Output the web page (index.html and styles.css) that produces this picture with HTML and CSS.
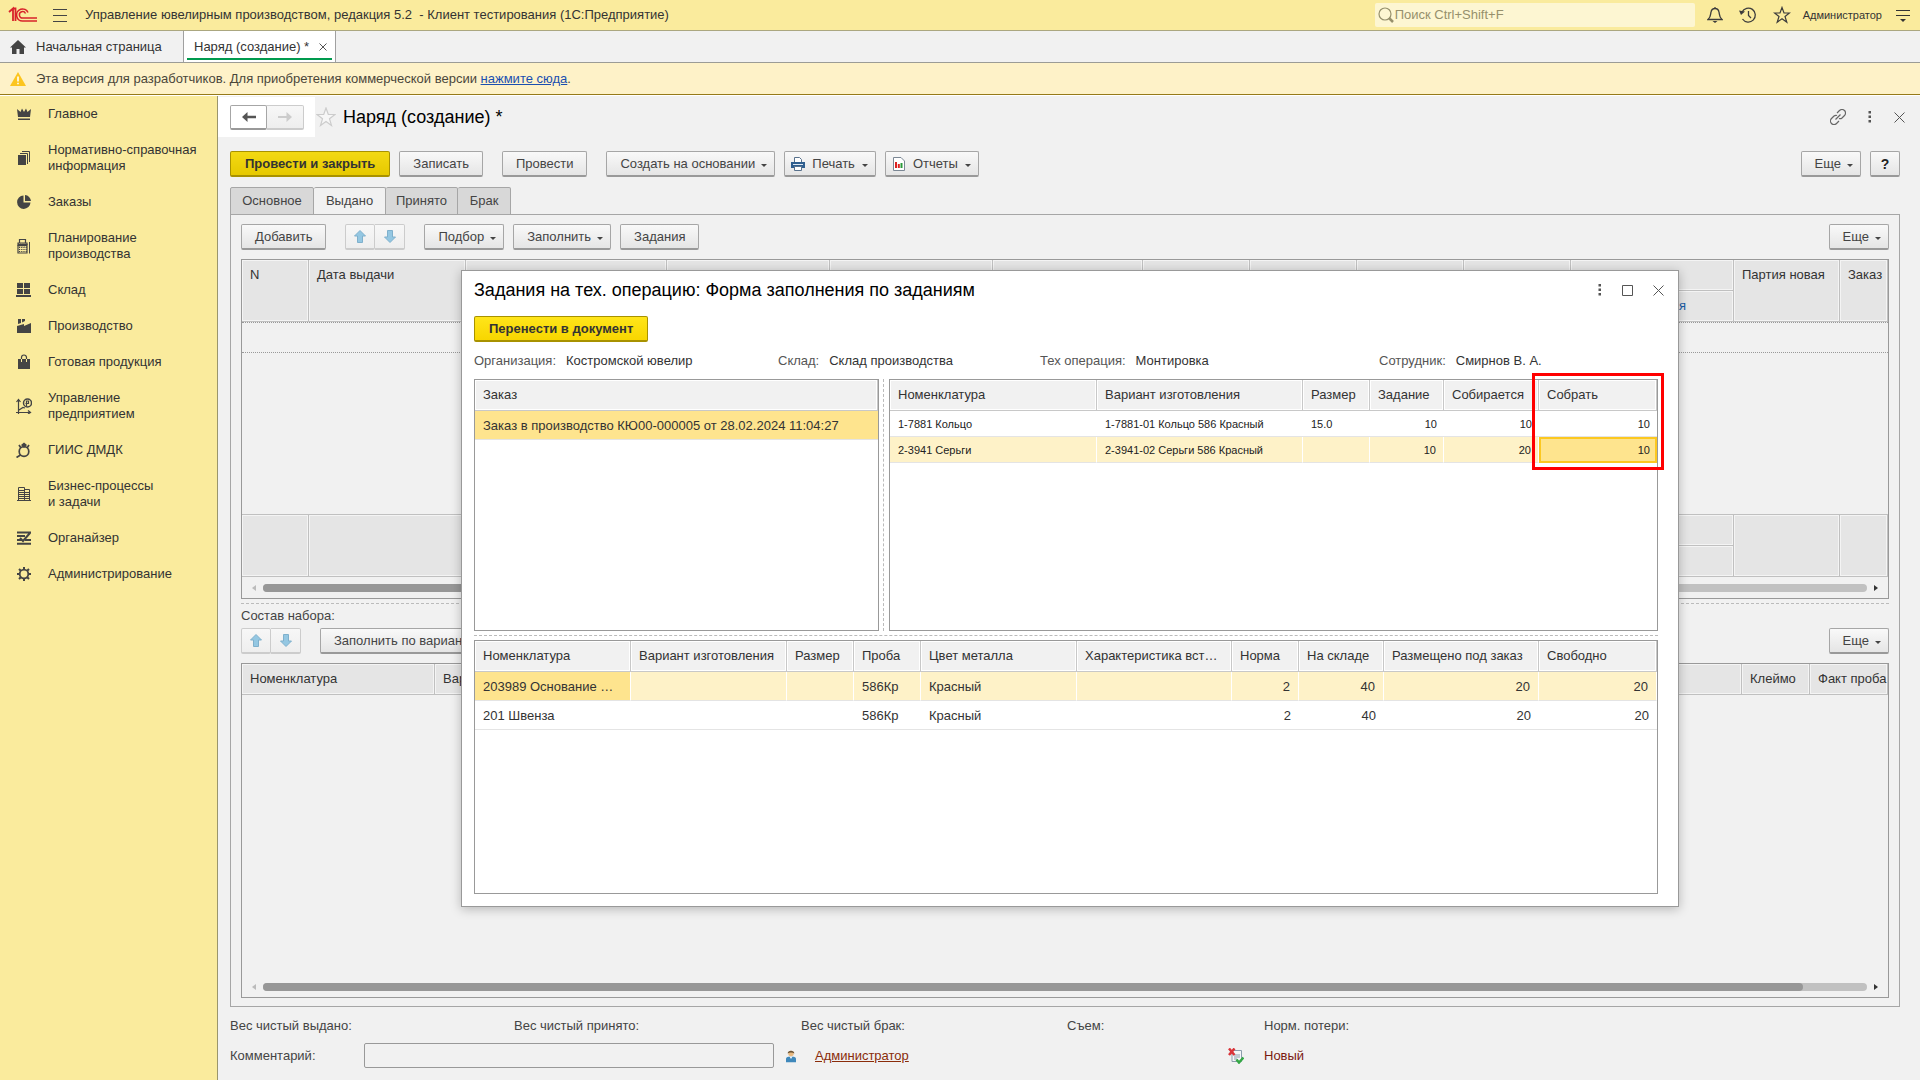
FILE: index.html
```html
<!DOCTYPE html>
<html lang="ru">
<head>
<meta charset="utf-8">
<title>Наряд (создание) *</title>
<link rel="stylesheet" href="styles.css">
</head>
<body>
<div class="app">
  <header class="topbar">
    <svg class="logo" width="30" height="18" viewBox="0 0 30 18" fill="none" stroke="#d8232a"><path d="M1 6L5 2.500V15M5 2.500H7.500V15" stroke-width="1.800"/><path d="M20 6.500A6 6 0 1 0 15 15H29" stroke-width="1.600"/><path d="M17.500 7.500A3.200 3.200 0 1 0 15 12H29" stroke-width="1.500"/></svg>
    <button class="plain burger" aria-label="Меню"><svg width="14" height="14" viewBox="0 0 14 14" stroke="#444" stroke-width="1"><path d="M0 1.500H14M0 7.500H14M0 13.500H14"/></svg></button>
    <span class="app-title">Управление ювелирным производством, редакция 5.2 &nbsp;- Клиент тестирования (1С:Предприятие)</span>
    <div class="search">
      <svg width="16" height="16" viewBox="0 0 16 16" fill="none" stroke="#96906c" stroke-width="1.200"><circle cx="7" cy="7" r="6"/><path d="M11 11L15 15" stroke-width="2.500"/></svg>
      <input type="text" placeholder="Поиск Ctrl+Shift+F" aria-label="Поиск">
    </div>
    <button class="plain" aria-label="Уведомления"><svg width="16" height="18" viewBox="0 0 16 18" fill="none" stroke="#3c3c3c" stroke-width="1.300"><path d="M1 13.500C4 11 3.500 8 4 6C4.500 3.500 6 2.500 8 2.500S11.500 3.500 12 6C12.500 8 12 11 15 13.500ZM8 1V3"/><path d="M5.500 15H10.500L8 17Z" fill="#3c3c3c" stroke="none"/></svg></button>
    <button class="plain" aria-label="История"><svg width="18" height="18" viewBox="0 0 18 18" fill="none" stroke="#3c3c3c" stroke-width="1.300"><path d="M3 6A7 7 0 1 1 3.500 13M9.500 5V9.500L12 12"/><path d="M0 4.500L6 5.500L2 9Z" fill="#3c3c3c" stroke="none"/></svg></button>
    <button class="plain" aria-label="Избранное"><svg width="18" height="18" viewBox="0 0 18 18" fill="none" stroke="#3c3c3c" stroke-width="1.200"><path d="M9 1.500L11 7H16.500L12 10.500L13.800 16.200L9 12.800L4.200 16.200L6 10.500L1.500 7H7Z"/></svg></button>
    <span class="user">Администратор</span>
    <button class="plain settings" aria-label="Настройки"><svg width="14" height="14" viewBox="0 0 14 14"><path d="M0 2.500H14M0 7.500H14" stroke="#333"/><path d="M4 11H10L7 14Z" fill="#333"/></svg></button>
  </header>

  <nav class="tabs-open">
    <a class="open-tab home" href="#"><svg width="16" height="14" viewBox="0 0 16 14" fill="#444"><path d="M8 0L16 7.500H14V14H9.500V9H6.500V14H2V7.500H0Z"/></svg>Начальная страница</a>
    <a class="open-tab current" href="#">Наряд (создание) *<svg width="8" height="8" viewBox="0 0 8 8" stroke="#555"><path d="M0.500 0.500L7.500 7.500M7.500 0.500L0.500 7.500"/></svg></a>
  </nav>

  <div class="notice">
    <svg width="16" height="14" viewBox="0 0 16 14"><path d="M8 0L16 14H0Z" fill="#fcc51e"/><path d="M8 4.500V9.500M8 10.800V12.300" stroke="#fff" stroke-width="1.600"/></svg>
    <span>Эта версия для разработчиков. Для приобретения коммерческой версии <a href="#">нажмите сюда</a>.</span>
  </div>

  <div class="body">
    <nav class="sidebar">
      <a href="#"><svg viewBox="0 0 16 16" fill="#444"><path d="M1 3L4.500 6L6 2.500L8 6L10 2.500L11.500 6L15 3L14 11H2Z"/><path d="M2 12.500H14V14H2Z"/></svg><span>Главное</span></a>
      <a href="#"><svg viewBox="0 0 16 16"><path d="M2 5H10V15H2Z" fill="#444"/><path d="M4 3.500H11.500V14M6 1.500H13.500V12" fill="none" stroke="#444"/></svg><span>Нормативно-справочная информация</span></a>
      <a href="#"><svg viewBox="0 0 16 16" fill="#444"><path d="M7.500 1.500A6.700 6.700 0 1 0 14.500 8.500H12L7.500 8.500Z"/><path d="M9 1A6.500 6.500 0 0 1 15 7H9Z"/></svg><span>Заказы</span></a>
      <a href="#"><svg viewBox="0 0 16 16"><path d="M2 5H11V15H2ZM3.500 1.500H9.500V5H3.500Z" fill="none" stroke="#444" stroke-width="1.200"/><path d="M2 6H11V8H2ZM3 9.500H11M3 11.500H11M3 13.500H11" fill="#444" stroke="#444" stroke-dasharray="1.200 1"/><path d="M13.500 4V15.500" stroke="#444"/></svg><span>Планирование производства</span></a>
      <a href="#"><svg viewBox="0 0 16 16" fill="#444"><path d="M1 1H7V6H1ZM8 1H14V6H8ZM1 7H7V12H1ZM8 7H14V12H8ZM0 13H15V15H0Z"/></svg><span>Склад</span></a>
      <a href="#"><svg viewBox="0 0 16 16" fill="#444"><path d="M1 15V8L8 6V8L15 5V15ZM2 1H5V5L2 6ZM6 1H9V3L6 4.500Z"/></svg><span>Производство</span></a>
      <a href="#"><svg viewBox="0 0 16 16"><path d="M2 5H14V15H2Z" fill="#444"/><path d="M5.500 5V3.500A2.500 2.500 0 0 1 10.500 3.500V5" fill="none" stroke="#444" stroke-width="1.200"/><path d="M5.500 5V8M10.500 5V8" stroke="#faeb9d"/></svg><span>Готовая продукция</span></a>
      <a href="#"><svg viewBox="0 0 16 16" fill="none" stroke="#444" stroke-width="1.200"><path d="M2.500 16V2M0.500 4L2.500 1.500L4.500 4M0 14.500H14M12 12.500L14.500 14.500L12 16M3 12L7 9.500L9 10"/><circle cx="11.500" cy="5" r="4" stroke-width="1.500"/><path d="M10.500 8V3H12.500V5.500H9.500"/></svg><span>Управление предприятием</span></a>
      <a href="#"><svg viewBox="0 0 16 16" fill="none" stroke="#444"><circle cx="8" cy="9.500" r="4.800" stroke-width="1.700"/><path d="M4.500 13L0.500 15.500M3 3L5 6M13 3L11 6" stroke-width="1.700"/><path d="M5 3L8 0.500L11 3L8 6Z" fill="#444" stroke="none"/></svg><span>ГИИС ДМДК</span></a>
      <a href="#"><svg viewBox="0 0 16 16" fill="none" stroke="#444"><path d="M2.500 1.500H8.500V14.500H2.500ZM8.500 3.500H13.500V14.500H8.500M1 14.500H15M2 4.500H8M2 6.500H13M2 8.500H13M2 10.500H13M2 12.500H13"/></svg><span>Бизнес-процессы<br>и задачи</span></a>
      <a href="#"><svg viewBox="0 0 16 16" fill="none" stroke="#444" stroke-width="2"><path d="M1 2.500H15M1 6H9M1 10H6M9 10H15M1 13.800H15M4 8L7 11L14 3"/></svg><span>Органайзер</span></a>
      <a href="#"><svg viewBox="0 0 16 16" fill="none" stroke="#444"><circle cx="8" cy="8" r="4.300" stroke-width="1.800"/><path d="M8 1V3.500M8 12.500V15M1 8H3.500M12.500 8H15M3 3L4.800 4.800M11.200 11.200L13 13M13 3L11.200 4.800M4.800 11.200L3 13" stroke-width="2"/></svg><span>Администрирование</span></a>
    </nav>

    <main class="doc">
      <div class="doc-head">
        <div class="nav-patch">
          <div class="pair">
            <button class="btn" aria-label="Назад"><svg width="14" height="10" viewBox="0 0 14 10"><path d="M5.500 0L0 5L5.500 10V6.300H14V3.700H5.500Z" fill="#555"/></svg></button>
            <button class="btn off" aria-label="Вперед"><svg width="14" height="10" viewBox="0 0 14 10"><path d="M8.500 0L14 5L8.500 10V6H0V4H8.500Z" fill="#ccc"/></svg></button>
          </div>
        </div>
        <svg class="fav" width="20" height="20" viewBox="0 0 20 20" fill="#f7f7f7" stroke="#ccc" stroke-width="1.200"><path d="M10 1L12.300 7.500H19L13.500 11.800L15.500 18.500L10 14.500L4.500 18.500L6.500 11.800L1 7.500H7.700Z"/></svg>
        <h1>Наряд (создание) *</h1>
        <div class="win-icons">
          <button class="plain" aria-label="Ссылка"><svg width="16" height="16" viewBox="0 0 16 16" fill="none" stroke="#666" stroke-width="1.200"><path d="M7 4L9.500 1.500A3.200 3.200 0 0 1 14.500 6.500L12 9A3 3 0 0 1 9 9.500M9 12L6.500 14.500A3.200 3.200 0 0 1 1.500 9.500L4 7A3 3 0 0 1 7 6.500M5.500 10.500L10.500 5.500"/></svg></button>
          <button class="plain" aria-label="Действия"><svg width="4" height="12" viewBox="0 0 4 12" fill="#555"><path d="M0.500 0H3V2.500H0.500ZM0.500 4.500H3V7H0.500ZM0.500 9H3V11.500H0.500Z"/></svg></button>
          <button class="plain" aria-label="Закрыть"><svg width="11" height="11" viewBox="0 0 11 11" stroke="#555"><path d="M0.500 0.500L10.500 10.500M10.500 0.500L0.500 10.500"/></svg></button>
        </div>
      </div>

      <div class="toolbar commands">
        <button class="btn main">Провести и закрыть</button>
        <button class="btn">Записать</button>
        <button class="btn apart">Провести</button>
        <button class="btn apart menu">Создать на основании</button>
        <button class="btn menu with-icon"><svg width="14" height="14" viewBox="0 0 14 14"><path d="M3.500 5V0.500H8.500L10.500 2.500V5" fill="#fff" stroke="#58718c"/><path d="M0 5H14V11H0Z" fill="#2f5f8f"/><path d="M2 7.500H12" stroke="#dfe9f2"/><path d="M3.500 9.500H10.500V13.500H3.500Z" fill="#fff" stroke="#58718c"/></svg>Печать</button>
        <button class="btn menu with-icon"><svg width="14" height="14" viewBox="0 0 14 14"><path d="M1.500 0.500H9L12.500 4V13.500H1.500Z" fill="#fff" stroke="#7b8794"/><path d="M4 5V11" stroke="#d22" stroke-width="2"/><path d="M6.800 7V11" stroke="#d22" stroke-width="2"/><path d="M9.500 6V11" stroke="#2a9a3a" stroke-width="2"/></svg>Отчеты</button>
        <span class="grow"></span>
        <button class="btn menu">Еще</button>
        <button class="btn help">?</button>
      </div>

      <div class="page-tabs" role="tablist">
        <button role="tab" class="w83">Основное</button><button role="tab" class="w72 active" aria-selected="true">Выдано</button><button role="tab" class="w72">Принято</button><button role="tab" class="w53">Брак</button>
      </div>

      <section class="panel">
        <div class="toolbar">
          <button class="btn">Добавить</button>
          <div class="pair apart">
            <button class="btn off" aria-label="Вверх"><svg width="12" height="13" viewBox="0 0 12 13"><path d="M6 0.500L11.500 6H8.500V12.500H3.500V6H0.500Z" fill="#94c7e2" stroke="#7fb0cc"/></svg></button>
            <button class="btn off" aria-label="Вниз"><svg width="12" height="13" viewBox="0 0 12 13"><path d="M6 12.500L11.500 7H8.500V0.500H3.500V7H0.500Z" fill="#94c7e2" stroke="#7fb0cc"/></svg></button>
          </div>
          <button class="btn apart menu">Подбор</button>
          <button class="btn menu">Заполнить</button>
          <button class="btn">Задания</button>
          <span class="grow"></span>
          <button class="btn menu">Еще</button>
        </div>

        <div class="frame issue">
          <table class="grid grey tall">
            <colgroup><col class="c67"><col class="c157"><col class="c201"><col class="c163"><col class="c163"><col class="c150"><col class="c107"><col class="c107"><col class="c107"><col class="c107"><col class="c163"><col class="c106"><col></colgroup>
            <thead>
              <tr><th rowspan="2">N</th><th rowspan="2">Дата выдачи</th><th rowspan="2">Партия</th><th rowspan="2">Номенклатура</th><th rowspan="2">Размер</th><th rowspan="2">Форма Состав</th><th rowspan="2">Количество</th><th rowspan="2">Размер</th><th rowspan="2">Тип Вставки</th><th rowspan="2">Цвет</th><th>Приход / Заказ</th><th rowspan="2">Партия новая</th><th rowspan="2">Заказ</th></tr>
              <tr><th class="blue">Партия выданная</th></tr>
            </thead>
          </table>
          <div class="blank-row"></div>
          <div class="grow"></div>
          <table class="grid grey tall foot">
            <colgroup><col class="c67"><col class="c157"><col class="c201"><col class="c163"><col class="c163"><col class="c150"><col class="c107"><col class="c107"><col class="c107"><col class="c107"><col class="c163"><col class="c106"><col></colgroup>
            <tbody>
              <tr><td rowspan="2"></td><td rowspan="2"></td><td rowspan="2"></td><td rowspan="2"></td><td rowspan="2"></td><td rowspan="2"></td><td rowspan="2"></td><td rowspan="2"></td><td rowspan="2"></td><td rowspan="2"></td><td></td><td rowspan="2"></td><td rowspan="2"></td></tr>
              <tr><td></td></tr>
            </tbody>
          </table>
          <div class="scroll"><i class="arr left"></i><div class="track"><div class="thumb half"></div></div><i class="arr right"></i></div>
        </div>

        <div class="split-h"></div>
        <div class="caption">Состав набора:</div>
        <div class="toolbar">
          <div class="pair">
            <button class="btn off" aria-label="Вверх"><svg width="12" height="13" viewBox="0 0 12 13"><path d="M6 0.500L11.500 6H8.500V12.500H3.500V6H0.500Z" fill="#94c7e2" stroke="#7fb0cc"/></svg></button>
            <button class="btn off" aria-label="Вниз"><svg width="12" height="13" viewBox="0 0 12 13"><path d="M6 12.500L11.500 7H8.500V0.500H3.500V7H0.500Z" fill="#94c7e2" stroke="#7fb0cc"/></svg></button>
          </div>
          <button class="btn apart">Заполнить по варианту</button>
          <span class="grow"></span>
          <button class="btn menu">Еще</button>
        </div>

        <div class="frame kit">
          <table class="grid grey">
            <colgroup><col class="c193"><col><col class="c68"><col class="c78"></colgroup>
            <thead><tr><th>Номенклатура</th><th>Вариант</th><th>Клеймо</th><th>Факт проба</th></tr></thead>
          </table>
          <div class="grow"></div>
          <div class="scroll"><i class="arr left"></i><div class="track"><div class="thumb"></div></div><i class="arr right"></i></div>
        </div>
      </section>

      <footer class="doc-foot">
        <div class="totals"><span>Вес чистый выдано:</span><span>Вес чистый принято:</span><span>Вес чистый брак:</span><span>Съем:</span><span>Норм. потери:</span></div>
        <div class="comment">
          <label for="comment">Комментарий:</label>
          <input id="comment" type="text">
          <svg class="person" width="10" height="14" viewBox="0 0 12 15"><path d="M0 15V11C0 8.500 3 8.500 6 8.500S12 8.500 12 11V15Z" fill="#3f88bb"/><circle cx="6" cy="4.500" r="3.300" fill="#e8b981"/><path d="M2 4.500C2 0 10 0 10 4.500C8 3 4 3 2 4.500Z" fill="#6b5436"/><path d="M4.500 8.500L6 11L7.500 8.500Z" fill="#fff"/></svg>
          <a class="author" href="#">Администратор</a>
          <svg class="state" width="16" height="16" viewBox="0 0 16 16"><path d="M4 2.500H13.500V13.500H4Z" fill="#f4f6f8" stroke="#8b9dad"/><path d="M6 7H12M6 9H12M6 11H9" stroke="#8b9dad"/><path d="M1 0.500L6.500 7M6.500 0.500L1 7" stroke="#d9343a" stroke-width="2.500"/><path d="M8.500 11.500L11 14.500L15.500 9.500" fill="none" stroke="#34a845" stroke-width="2.500"/></svg>
          <span class="maroon">Новый</span>
        </div>
      </footer>
    </main>
  </div>

  <section class="dialog" role="dialog" aria-labelledby="dlg">
    <div class="dialog-head">
      <h2 id="dlg">Задания на тех. операцию: Форма заполнения по заданиям</h2>
      <div class="win-icons">
        <button class="plain" aria-label="Действия"><svg width="4" height="12" viewBox="0 0 4 12" fill="#555"><path d="M0.500 0H3V2.500H0.500ZM0.500 4.500H3V7H0.500ZM0.500 9H3V11.500H0.500Z"/></svg></button>
        <button class="plain" aria-label="Развернуть"><svg width="11" height="11" viewBox="0 0 11 11"><path d="M0.500 0.500H10.500V10.500H0.500Z" fill="none" stroke="#555"/></svg></button>
        <button class="plain" aria-label="Закрыть"><svg width="11" height="11" viewBox="0 0 11 11" stroke="#555"><path d="M0.500 0.500L10.500 10.500M10.500 0.500L0.500 10.500"/></svg></button>
      </div>
    </div>
    <button class="btn main bright">Перенести в документ</button>
    <dl class="facts">
      <div><dt>Организация:</dt><dd>Костромской ювелир</dd></div>
      <div><dt>Склад:</dt><dd>Склад производства</dd></div>
      <div><dt>Тех операция:</dt><dd>Монтировка</dd></div>
      <div><dt>Сотрудник:</dt><dd>Смирнов В. А.</dd></div>
    </dl>
    <div class="upper">
      <div class="frame white orders">
        <table class="grid">
          <thead><tr><th>Заказ</th></tr></thead>
          <tbody><tr><td class="picked">Заказ в производство КЮ00-000005 от 28.02.2024 11:04:27</td></tr></tbody>
        </table>
      </div>
      <div class="split-v"></div>
      <div class="frame white tasks">
        <table class="grid small">
          <colgroup><col class="c207"><col class="c206"><col class="c67"><col class="c74"><col class="c95"><col></colgroup>
          <thead><tr><th>Номенклатура</th><th>Вариант изготовления</th><th>Размер</th><th>Задание</th><th>Собирается</th><th>Собрать</th></tr></thead>
          <tbody>
            <tr><td>1-7881 Кольцо</td><td>1-7881-01 Кольцо 586 Красный</td><td>15.0</td><td class="num">10</td><td class="num">10</td><td class="num">10</td></tr>
            <tr class="on"><td>2-3941 Серьги</td><td>2-3941-02 Серьги 586 Красный</td><td></td><td class="num">10</td><td class="num">20</td><td class="num edit">10</td></tr>
          </tbody>
        </table>
        <div class="marker"></div>
      </div>
    </div>
    <div class="split-h"></div>
    <div class="frame white parts">
      <table class="grid">
        <colgroup><col class="c156"><col class="c156"><col class="c67"><col class="c67"><col class="c156"><col class="c155"><col class="c67"><col class="c85"><col class="c155"><col></colgroup>
        <thead><tr><th>Номенклатура</th><th>Вариант изготовления</th><th>Размер</th><th>Проба</th><th>Цвет металла</th><th>Характеристика вст…</th><th>Норма</th><th>На складе</th><th>Размещено под заказ</th><th>Свободно</th></tr></thead>
        <tbody>
          <tr class="on"><td class="picked">203989 Основание …</td><td></td><td></td><td>586Кр</td><td>Красный</td><td></td><td class="num">2</td><td class="num">40</td><td class="num">20</td><td class="num">20</td></tr>
          <tr><td>201 Швенза</td><td></td><td></td><td>586Кр</td><td>Красный</td><td></td><td class="num">2</td><td class="num">40</td><td class="num">20</td><td class="num">20</td></tr>
        </tbody>
      </table>
    </div>
  </section>
</div>
</body>
</html>
```
FILE: styles.css
```css
* { box-sizing: border-box; }

body {
  margin: 0;
  font: 13px/16px "Liberation Sans", Arial, sans-serif;
  color: #333;
  background: #f1f1f1;
}

button, input { font: inherit; color: inherit; }
h1, h2, dl, dd { margin: 0; font-weight: normal; }
svg { display: block; flex: none; }

.app {
  position: relative;
  display: flex;
  flex-direction: column;
  min-height: 100vh;
}

.plain { border: 0; padding: 0; background: none; }
.grow { flex: 1; }

/* Window header */
.topbar {
  display: flex;
  align-items: center;
  height: 31px;
  padding: 0 10px 0 8px;
  background: #faeb9d;
  border-bottom: 1px solid #aba780;
}
.topbar > .plain { margin-right: 16px; }
.topbar > .burger { margin: 0 0 0 15px; }
.topbar > .settings { margin-right: 0; }
.app-title { flex: 1; margin-left: 18px; }
.search {
  display: flex;
  align-items: center;
  width: 320px;
  height: 24px;
  margin-right: 12px;
  padding-left: 3px;
  border-radius: 2px;
  background: #fdf6d2;
}
.search input {
  flex: 1;
  padding: 0 1px;
  border: 0;
  background: none;
  outline: 0;
}
.search input::placeholder { color: #96906c; opacity: 1; }
.user { margin: 0 14px 0 -4px; font-size: 11px; }

/* Open windows */
.tabs-open {
  display: flex;
  height: 32px;
  border-bottom: 1px solid #9c9c96;
}
.open-tab {
  display: flex;
  align-items: center;
  color: #333;
  text-decoration: none;
}
.home { gap: 10px; width: 183px; padding-left: 10px; }
.current {
  position: relative;
  gap: 10px;
  width: 153px;
  padding-left: 10px;
  background: #fff;
  border: solid #a0a0a0;
  border-width: 0 1px;
}
.current::after {
  content: "";
  position: absolute;
  left: 3px;
  right: 3px;
  bottom: 2px;
  height: 2px;
  background: #009a4e;
}

.notice {
  display: flex;
  align-items: center;
  gap: 10px;
  height: 32px;
  padding-left: 10px;
  background: #fef2c8;
  border-bottom: 1px solid #967a18;
  color: #4a463a;
}
.notice a { color: #1a4fb0; }

.body { display: flex; flex: 1; border-top: 1px solid #fff; }

/* Sections */
.sidebar {
  width: 218px;
  background: #faeb9d;
  border-right: 1px solid #9a956c;
}
.sidebar a {
  display: flex;
  align-items: center;
  gap: 16px;
  padding: 10px 16px;
  color: #333;
  text-decoration: none;
}
.sidebar svg { width: 16px; height: 16px; }

/* Document form */
.doc {
  flex: 1;
  display: flex;
  flex-direction: column;
  min-width: 0;
  padding: 1px 20px 12px 12px;
}
.doc-head {
  display: flex;
  align-items: center;
  height: 40px;
  margin: 0 0 14px -12px;
}
.nav-patch {
  display: flex;
  align-items: center;
  width: 97px;
  height: 40px;
  padding-left: 12px;
  background: #fff;
}
.nav-patch .btn { width: 37px; height: 25px; background: #fff; }
.fav { margin: 0 7px 0 1px; }
h1, h2 { flex: 1; font-size: 18px; line-height: 22px; color: #000; }
.win-icons { display: flex; align-items: center; }
.doc-head .win-icons { gap: 22px; margin-right: -5px; }

.btn {
  height: 26px;
  padding: 1px 13px 0;
  border: 1px solid #a6a6a6;
  border-bottom: 2px solid #999;
  border-radius: 2px;
  background: linear-gradient(#f9f9f9, #e5e5e5);
  color: #444;
  white-space: nowrap;
}
.main {
  padding: 1px 14px 0;
  font-weight: bold;
  color: #333;
  background: linear-gradient(#f3d913, #e6c900);
  border-color: #a89200;
}
.bright { background: linear-gradient(#ffe51a, #f8d600); }
.menu { display: flex; align-items: center; padding-right: 7px; }
.menu::after {
  content: "";
  margin: 3px 0 0 6px;
  border: 3px solid transparent;
  border-top-color: #444;
  border-bottom: 0;
}
.with-icon { gap: 7px; padding-left: 6px; }
.with-icon::after { margin-left: 0; }
.help { width: 30px; padding: 0; font-size: 14px; font-weight: bold; color: #222; }

.toolbar { display: flex; gap: 9px; height: 26px; }
.apart { margin-left: 10px; }
.pair { display: flex; }
.pair .btn {
  display: flex;
  align-items: center;
  justify-content: center;
  padding: 0;
}
.pair .btn + .btn { border-left: 0; border-radius: 0 2px 2px 0; }
.toolbar .pair .btn { width: 30px; }
.btn.off { border-color: #ccc; background: linear-gradient(#f7f7f7, #eee); }

.page-tabs { display: flex; margin-top: 10px; }
.page-tabs button {
  height: 28px;
  margin-bottom: -1px;
  padding: 0;
  border: 1px solid #a6a6a6;
  border-left-width: 0;
  border-radius: 2px 2px 0 0;
  background: #d8d8d8;
  color: #444;
}
.page-tabs button:first-child { border-left-width: 1px; }
.page-tabs .active { background: #f1f1f1; border-bottom-color: #f1f1f1; }
.w83 { width: 84px; }
.w72 { width: 72px; }
.w53 { width: 53px; }

.panel {
  flex: 1;
  display: flex;
  flex-direction: column;
  padding: 9px 10px 8px;
  border: 1px solid #a6a6a6;
}
.frame {
  display: flex;
  flex-direction: column;
  overflow: hidden;
  border: 1px solid #999;
}
.white { background: #fff; }
.issue { flex: 0 0 340px; margin-top: 9px; }
.kit { flex: 1; margin-top: 9px; min-height: 200px; }

/* Grids */
.grid {
  width: 100%;
  table-layout: fixed;
  border-collapse: separate;
  border-spacing: 0;
}
.grid th {
  height: 31px;
  padding: 0 8px;
  text-align: left;
  font-weight: normal;
  background: #f1f1f1;
  border-right: 1px solid #c8c8c8;
  border-bottom: 1px solid #c8c8c8;
  box-shadow: inset 0 0 0 1px #fff;
  white-space: nowrap;
  overflow: hidden;
}
.grid td {
  height: 29px;
  padding: 1px 8px 0;
  border-bottom: 1px solid #e4e4e4;
  white-space: nowrap;
  overflow: hidden;
}
.grid .num { text-align: right; }
.small td { height: 26px; padding: 0 7px 0 8px; font-size: 11px; color: #222; }
.grid .on td { background: #fef2c8; border-right: 1px solid #fff; }
.grid .picked, .grid .on .picked { background: #fee48e; }
.grid .on .edit { background: #fee48e; border: 2px solid #fcc820; padding-right: 5px; }

.grey th, .grey td {
  background: #e5e5e5;
  box-shadow: inset 0 0 0 1px #f4f4f4;
  border-right: 1px solid #c0c0c0;
  border-bottom: 1px solid #c0c0c0;
}
.grey th:last-child { padding-right: 0; }
.tall th { vertical-align: top; padding-top: 7px; }
.foot { border-top: 1px solid #c0c0c0; }
.foot td { height: 31px; }
.tall .blue { color: #1a5fa8; }
.blank-row { height: 31px; border: dotted #999; border-width: 1px 0; }

.c67 { width: 67px; }
.c68 { width: 68px; }
.c74 { width: 74px; }
.c78 { width: 78px; }
.c85 { width: 85px; }
.c95 { width: 95px; }
.c106 { width: 106px; }
.c107 { width: 107px; }
.c150 { width: 150px; }
.c155 { width: 155px; }
.c156 { width: 156px; }
.c157 { width: 157px; }
.c163 { width: 163px; }
.c193 { width: 193px; }
.c201 { width: 201px; }
.c206 { width: 206px; }
.c207 { width: 207px; }

.scroll {
  display: flex;
  align-items: center;
  gap: 7px;
  height: 21px;
  padding: 0 10px;
}
.track { flex: 1; height: 8px; border-radius: 4px; background: #c1c1c1; }
.thumb { width: 96%; height: 8px; border-radius: 4px; background: #979797; }
.half { width: 60%; }
.arr { border: 3px solid transparent; }
.arr.left { border-left: 0; border-right: 4px solid #bbb; }
.arr.right { border-right: 0; border-left: 4px solid #333; }

.split-h { height: 1px; margin: 4px 0; border-top: 1px dashed #bbb; }
.split-v { width: 1px; margin: 0 5px 0 4px; border-left: 1px dashed #bbb; }
.caption { padding-bottom: 4px; color: #444; }

/* Form footer */
.doc-foot { padding-top: 11px; color: #444; }
.totals {
  display: grid;
  grid-template-columns: 284px 287px 266px 197px 1fr;
}
.comment { display: flex; align-items: center; margin-top: 9px; }
.comment label { width: 134px; }
.comment input {
  width: 410px;
  height: 25px;
  margin-right: 12px;
  border: 1px solid #999;
  border-radius: 2px;
  background: #f1f1f1;
}
.author { width: 413px; margin-left: 19px; color: #8a2c0a; }
.maroon { margin-left: 20px; color: #7a1a10; }

/* Fill-in window */
.dialog {
  position: absolute;
  left: 461px;
  right: 241px;
  top: 270px;
  bottom: 173px;
  display: flex;
  flex-direction: column;
  padding: 8px 20px 12px 12px;
  background: #fff;
  border: 1px solid #999;
  box-shadow: 0 2px 10px rgba(0, 0, 0, 0.25);
}
.dialog-head { display: flex; height: 22px; margin-bottom: 15px; }
.dialog-head .win-icons { gap: 20px; margin-right: -6px; }
.dialog .main { align-self: flex-start; }
.facts {
  display: grid;
  grid-template-columns: 304px 262px 339px 1fr;
  margin: 11px 0 10px;
}
.facts div { display: flex; gap: 10px; }
.facts dt { color: #555; }
.upper { display: flex; flex: 1; min-height: 0; }
.orders { width: 405px; }
.tasks { position: relative; flex: 1; overflow: visible; }
.marker {
  position: absolute;
  right: -7px;
  top: -7px;
  width: 132px;
  height: 97px;
  border: 3px solid #f00;
}
.parts { flex: 1; min-height: 0; }
```
